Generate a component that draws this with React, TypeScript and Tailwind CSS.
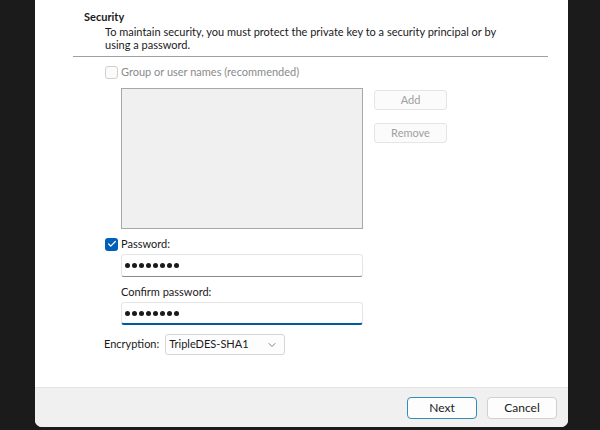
import { Check, ChevronDown } from "lucide-react";

const Dots = () => (
    <div className="flex items-center gap-[2px] pl-[3px]">
        {Array.from({ length: 8 }).map((_, i) => (
            <span key={i} className="block h-[5px] w-[5px] rounded-full bg-[#1a1a1a]" />
        ))}
    </div>
);

const SideButton = ({ label }: { label: string }) => (
    <button className="h-[20px] w-[73px] rounded-[3px] border border-[#e5e5e5] bg-[#fbfbfb] text-[#a0a0a0]">
        {label}
    </button>
);

const App = () => {
    return (
        <div
            className="flex h-[430px] w-[600px] bg-[#1b1b1b] text-[11px] text-[#1a1a1a]"
            style={{ fontFamily: 'Lato, "Noto Sans", sans-serif' }}
        >
            <div className="ml-[35px] flex h-[427px] w-[533px] flex-col overflow-hidden rounded-br-[7px] rounded-bl-[7px] bg-white">
                <div className="flex-1 pl-[49px] pr-[20px]">
                    <div className="pt-[9px] font-bold leading-[16px]">Security</div>
                    <p className="pl-[21px] leading-[13px]">
                        To maintain security, you must protect the private key to a security principal or by
                        <br />
                        using a password.
                    </p>
                    <div className="-ml-[11px] mt-[5px] h-px w-[475px] bg-[#a0a0a0]" />

                    <div className="ml-[21px] mt-[8px] flex items-center gap-[3px] text-[#8a8a8a]">
                        <span className="block h-[13px] w-[13px] rounded-[3px] border border-[#cfcfcf] bg-[#fbfbfb]" />
                        <span className="leading-[14px]">Group or user names (recommended)</span>
                    </div>

                    <div className="ml-[37px] mt-[9px] flex gap-[11px]">
                        <div className="h-[141px] w-[242px] border border-[#a8a8a8] bg-[#f0f0f0]" />
                        <div className="flex flex-col gap-[13px] pt-[2px]">
                            <SideButton label="Add" />
                            <SideButton label="Remove" />
                        </div>
                    </div>

                    <div className="ml-[21px] mt-[8px] flex items-center gap-[3px]">
                        <span className="flex h-[13px] w-[13px] items-center justify-center rounded-[3px] bg-[#005fb8]">
                            <Check size={10} strokeWidth={3} className="text-white" />
                        </span>
                        <span className="leading-[14px]">Password:</span>
                    </div>
                    <div className="ml-[37px] mt-[3px] flex h-[23px] w-[242px] items-center rounded-[3px] border border-[#e5e5e5] border-b-[#8a8a8a]">
                        <Dots />
                    </div>

                    <div className="ml-[37px] mt-[8px] leading-[14px]">Confirm password:</div>
                    <div className="ml-[37px] mt-[3px] flex h-[23px] w-[242px] items-center rounded-[3px] border border-[#e5e5e5] border-b-2 border-b-[#005a9e]">
                        <Dots />
                    </div>

                    <div className="ml-[20px] mt-[9px] flex items-center gap-[6px]">
                        <span>Encryption:</span>
                        <div className="flex h-[21px] w-[120px] items-center justify-between rounded-[3px] border border-[#d6d6d6] bg-[#fdfdfd] pl-[3px] pr-[6px]">
                            <span>TripleDES-SHA1</span>
                            <ChevronDown size={12} strokeWidth={1.5} className="text-[#5a5a5a]" />
                        </div>
                    </div>
                </div>

                <div className="flex h-[40px] items-center justify-end gap-[10px] border-t border-[#e3e3e3] bg-[#f0f0f0] pr-[11px] text-[12px]">
                    <button className="h-[22px] w-[70px] rounded-[4px] border border-[#2f8fb8] bg-[#fdfdfd]">Next</button>
                    <button className="h-[22px] w-[70px] rounded-[4px] border border-[#d0d0d0] bg-[#fdfdfd]">Cancel</button>
                </div>
            </div>
        </div>
    );
};

export default App;
